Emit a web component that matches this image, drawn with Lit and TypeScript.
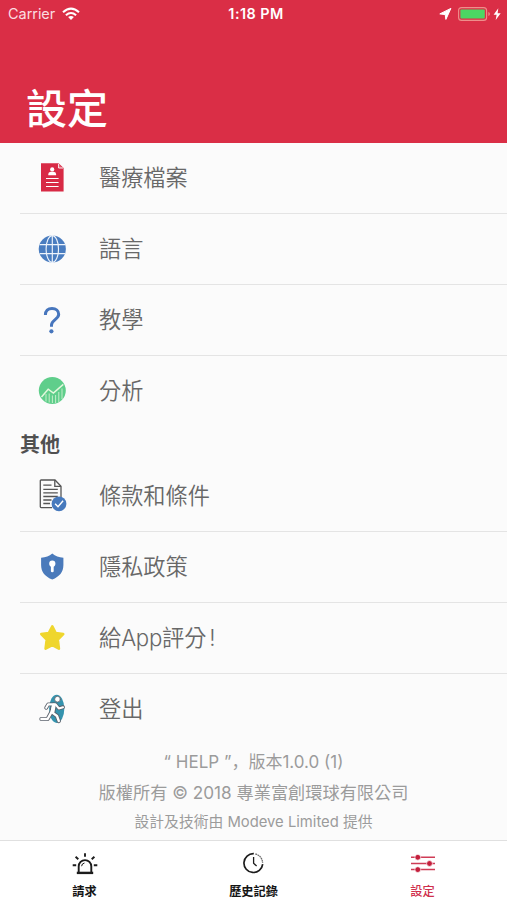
import { LitElement, html, svg, css, TemplateResult, SVGTemplateResult } from "lit";
import { customElement, property } from "lit/decorators.js";

const icons: Record<string, SVGTemplateResult> = {
  record: svg`
    <path d="M5 1.2H22.6L27.6 6V29.6H5z" fill="#d82a45"/>
    <path d="M22.6 1.8V6H27" fill="#e0566b" stroke="#fff" stroke-width=".9"/>
    <circle cx="16.2" cy="7.4" r="2.1" fill="#fff"/>
    <path d="M12.3 13.3v-1.2q0-2.2 2.4-2.4h3q2.4.2 2.4 2.4v1.2z" fill="#fff"/>
    <path d="M10 16.5H22.6M10 20.5H22.6M10 24.5H22.6" stroke="#fff" stroke-width="1.2"/>`,
  globe: svg`
    <circle cx="16.3" cy="16" r="13.6" fill="#4a7dc0"/>
    <g fill="none" stroke="#eef4fb" stroke-width="1.15">
      <ellipse cx="16.3" cy="16" rx="6.2" ry="13.4"/>
      <path d="M16.3 2.4V29.6M3.6 11.6H29M3.6 20.6H29"/>
    </g>`,
  question: svg`
    <path d="M9.4 11C9.4 6.8 12 4.4 16 4.4s6.7 2.4 6.7 5.9c0 5.1-7.2 5.5-7.2 10.7v1.8" fill="none" stroke="#4776bd" stroke-width="3"/>
    <circle cx="15.4" cy="27.3" r="2.1" fill="#4776bd"/>`,
  chart: svg`
    <circle cx="16.3" cy="15.5" r="13.5" fill="#5fce8b"/>
    <g fill="none" stroke="#e4f8dd">
      <path d="M5.5 22L12.2 14.2L17.4 18L27.3 9.4" stroke-width="1.5"/>
      <path d="M10 19V26.5M13.2 18.5V27.5M16.4 20.5V28M19.6 20V28M22.8 17V27M26 13.5V24" stroke-width="1" opacity=".75"/>
    </g>`,
  terms: svg`
    <g fill="none" stroke="#555" stroke-width="1.3">
      <path d="M16 27.6H5.1Q4.3 27.6 4.3 26.8V.8Q4.3 0 5.1 0H19L25 6.2V17"/>
      <path d="M18.8 0V6.3H25M7.3 5.2H15.5M7.3 9.3H21.8M7.3 12.9H21.8M7.3 16.5H21.8M7.3 20H15.5M7.3 23.5H14"/>
    </g>
    <circle cx="23" cy="23.8" r="7.4" fill="#4679bd"/>
    <path d="M19.1 23.8L22 26.8L27.1 20.8" fill="none" stroke="#fff" stroke-width="1.4"/>`,
  shield: svg`
    <path d="M16.3 2.6C19.4 5.4 22.8 6.5 27.4 6.8V14C27.4 21.2 23.3 25.8 16.3 28.5C9.2 25.8 5.1 21.2 5.1 14V6.8C9.8 6.5 13.2 5.4 16.3 2.6z" fill="#4a7abb"/>
    <circle cx="16.3" cy="12.7" r="3.1" fill="#fff"/>
    <path d="M14.9 14H17.7V20.2Q17.7 21.3 16.3 21.3T14.9 20.2z" fill="#fff"/>`,
  star: svg`
    <path d="M16.3 4.4L19.7 11L27.2 12L21.8 17.6L22.9 26.6L16.3 23.2L9.6 26.6L10.7 17.6L5.3 12L12.8 11z" fill="#efd62d" stroke="#efd62d" stroke-width="2.6" stroke-linejoin="round"/>`,
  exit: svg`
    <ellipse cx="20.7" cy="15.8" rx="7.6" ry="14.1" fill="#3493ae"/>
    <g fill="none" stroke-linecap="round" stroke-linejoin="round">
      <g stroke="#5b626c">
        <path d="M10.2 14.8L12.2 11.4H19.6L22.8 15.4L27 14.2" stroke-width="3.9"/>
        <path d="M17.2 13L15.6 18.8L11.6 26H5.4M16.4 19.6L21 23L22.8 28" stroke-width="4.2"/>
        <path d="M17.8 12.4L16.6 18.6" stroke-width="5.6"/>
      </g>
      <g stroke="#fff">
        <path d="M10.2 14.8L12.2 11.4H19.6L22.8 15.4L27 14.2" stroke-width="2.1"/>
        <path d="M17.2 13L15.6 18.8L11.6 26H5.4M16.4 19.6L21 23L22.8 28" stroke-width="2.4"/>
        <path d="M17.8 12.4L16.6 18.6" stroke-width="3.8"/>
      </g>
      <circle cx="21.5" cy="6.2" r="2.9" fill="#fff" stroke="#5b626c" stroke-width=".9"/>
    </g>`,
  siren: svg`
    <g fill="none" stroke="#1c1c1c" stroke-width="1.9">
      <path d="M9.7 20.6V14.4a6.3 6.3 0 0 1 12.6 0V20.6"/>
      <path d="M7.8 20.9H24.2" stroke-width="2.4"/>
      <path d="M3.7 13.3H7.2M24.8 13.3H28.3M16 1.2V4.8M6.6 4.7L9.3 7.2M25.4 4.7L22.7 7.2"/>
      <path d="M12.6 14.2q.2-2.8 2.9-3.2" stroke-width="1"/>
    </g>`,
  clock: svg`
    <g fill="none" stroke="#1c1c1c" transform="translate(-.8 -.5)">
      <path d="M16.6 2.2A9.4 9.4 0 1 0 25.5 12.6" stroke-width="1.7"/>
      <path d="M18.2 2.5A9.3 9.3 0 0 1 25.4 11.4" stroke-width="1.3" stroke-dasharray="1.7 .6" opacity=".65"/>
      <path d="M16.4 5.6V11.8L19.4 14.6" stroke-width="1.3"/>
    </g>`,
  sliders: svg`
    <path d="M4 5.3H28M4 11.5H28M4 17.6H28" stroke="#cf3c56" stroke-width="1.5"/>
    <g fill="#c41f3c" stroke="#fff" stroke-width=".7"><circle cx="10.8" cy="5.3" r="2.9"/><circle cx="22.5" cy="11.5" r="2.9"/><circle cx="10.8" cy="17.6" r="2.9"/></g>`,
};

@customElement("app-icon")
class AppIcon extends LitElement {
  @property() name = "";
  static styles = css`
    :host { display: block; flex: none; width: 32px; height: 32px; }
    svg { display: block; overflow: visible; }
  `;
  render() {
    return html`<svg width="32" height="32" viewBox="0 0 32 32">${icons[this.name]}</svg>`;
  }
}

@customElement("status-bar")
class StatusBar extends LitElement {
  static styles = css`
    :host { display: grid; grid-template-columns: 1fr auto 1fr; align-items: center; height: 27px; padding: 0 5px 0 8px; color: #fff; font-size: 14.5px; }
    .left, .right { display: flex; align-items: center; }
    .left { gap: 7px; letter-spacing: -0.05px; color: #fbdce1; }
    .right { justify-content: flex-end; }
    .time { font-weight: 600; font-size: 14.4px; letter-spacing: 0.45px; transform: translateX(1px); }
    svg { display: block; }
  `;
  render() {
    return html`
      <div class="left">Carrier
        <svg width="18" height="14" viewBox="0 0 18 14">
          <g fill="none" stroke="#fff" stroke-width="2.1"><path d="M1 5.2Q9-1.8 17 5.2M3.9 8.2Q9 3.8 14.1 8.2"/></g>
          <path d="M9 12.9L6.1 10Q9 7.8 11.9 10z" fill="#fff"/>
        </svg>
      </div>
      <div class="time">1:18 PM</div>
      <div class="right">
        <svg width="64" height="16" viewBox="0 0 64 16">
          <path d="M12.9 2.4L7.9 13.4L7.2 8.6L1.8 7.9z" fill="#fff" stroke="#fff" stroke-width="1" stroke-linejoin="round"/>
          <rect x="20.6" y="1.6" width="28" height="12.8" rx="3" fill="none" stroke="#ee8f8b" stroke-width="1.1"/>
          <rect x="22.4" y="3.4" width="24.4" height="9.2" rx="1" fill="#4bd763"/>
          <path d="M50.4 6v4q1.5-.6 1.5-2t-1.5-2z" fill="#ee8f8b"/>
          <path d="M60.3 2.3L55.6 8.7H58.6L57.7 13.9L62.7 7.2H59.6z" fill="#fff"/>
        </svg>
      </div>`;
  }
}

@customElement("app-root")
class AppRoot extends LitElement {
  static styles = css`
    :host { display: flex; flex-direction: column; width: 507px; height: 900px; overflow: hidden; background: #fbfbfb; color: #686868; font-family: Inter, "Noto Sans CJK TC", sans-serif; white-space: nowrap; }
    header { flex: none; height: 143px; background: #da2e46; }
    h1 { margin: 0; padding: 46px 0 0 26px; font-size: 41px; line-height: 66px; font-weight: 500; color: #fff; font-family: "Noto Sans CJK TC", sans-serif; }
    .row { display: flex; align-items: center; height: 70px; margin-left: 20px; padding-left: 16px; gap: 31px; border-bottom: 1px solid #e4e4e4; font-size: 22.2px; font-weight: 350; }
    .row:last-child { border-color: transparent; }
    .label { line-height: 32px; }
    .latin { font-weight: 300; letter-spacing: -0.3px; }
    .mark { margin-left: 3px; }
    h2 { margin: 0; padding-left: 20px; height: 34px; line-height: 36px; font-size: 20px; font-weight: 700; color: #505050; }
    footer { display: flex; flex-direction: column; align-items: center; flex: 1; padding-top: 3px; color: #9b9b9b; }
    .line { height: 30px; line-height: 30px; font-size: 17.2px; }
    .version { font-size: 17px; line-height: 28px; }
    .comma { font-family: "Noto Sans CJK SC", sans-serif; line-height: 1; }
    .small { font-size: 14.8px; height: 28px; line-height: 28px; }
    nav { flex: none; display: grid; grid-template-columns: repeat(3, 1fr); height: 60px; background: #fff; border-top: 1px solid #e0e0e0; box-sizing: border-box; }
    .tab { display: flex; flex-direction: column; align-items: center; padding-top: 11px; color: #151515; font-size: 12.2px; font-weight: 700; }
    .tab span { line-height: 18px; margin-top: -1px; }
    .active { color: #cf2f4c; font-weight: 500; }
  `;

  row(icon: string, label: string | TemplateResult): TemplateResult {
    return html`<div class="row"><app-icon name=${icon}></app-icon><span class="label">${label}</span></div>`;
  }

  render() {
    return html`
      <header>
        <status-bar></status-bar>
        <h1>設定</h1>
      </header>
      <section>
        ${this.row("record", "醫療檔案")}
        ${this.row("globe", "語言")}
        ${this.row("question", "教學")}
        ${this.row("chart", "分析")}
      </section>
      <h2>其他</h2>
      <section>
        ${this.row("terms", "條款和條件")}
        ${this.row("shield", "隱私政策")}
        ${this.row("star", html`給<span class="latin">App</span>評分<span class="latin mark">!</span>`)}
        ${this.row("exit", "登出")}
      </section>
      <footer>
        <div class="line version">“ HELP ”<span class="comma" lang="zh-Hans">，</span>版本1.0.0 (1)</div>
        <div class="line">版權所有 © 2018 專業富創環球有限公司</div>
        <div class="line small">設計及技術由 Modeve Limited 提供</div>
      </footer>
      <nav>
        <div class="tab"><app-icon name="siren"></app-icon><span>請求</span></div>
        <div class="tab"><app-icon name="clock"></app-icon><span>歷史記錄</span></div>
        <div class="tab active"><app-icon name="sliders"></app-icon><span>設定</span></div>
      </nav>`;
  }
}
